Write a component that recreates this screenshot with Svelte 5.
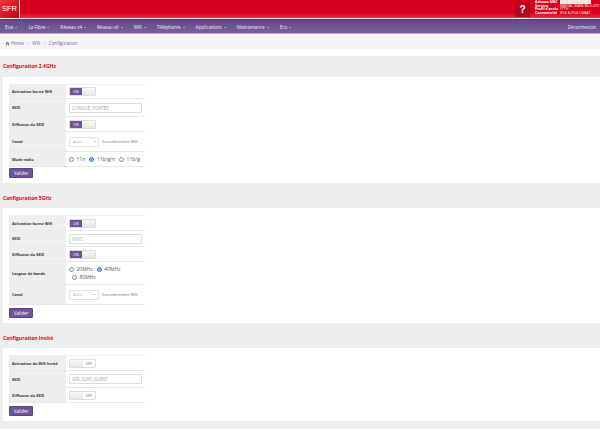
<script>
	const menu = ['Etat', 'La Fibre', 'Réseau v4', 'Réseau v6', 'Wifi', 'Téléphonie', 'Applications', 'Maintenance', 'Eco'];

	const sections = [
		{
			title: 'Configuration 2.4GHz',
			buttonGap: 1,
			rows: [
				{ label: 'Activation borne Wifi', type: 'toggle', on: true, h: 14 },
				{ label: 'SSID', type: 'input', value: 'LONGUE_PORTEE', h: 18 },
				{ label: 'Diffusion du SSID', type: 'toggle', on: true, h: 15 },
				{ label: 'Canal', type: 'select', h: 20 },
				{ label: 'Mode radio', type: 'radio', options: ['11n', '11b/g/n', '11b/g'], checked: '11b/g/n', h: 15 }
			]
		},
		{
			title: 'Configuration 5GHz',
			buttonGap: 3,
			rows: [
				{ label: 'Activation borne Wifi', type: 'toggle', on: true, h: 15 },
				{ label: 'SSID', type: 'input', value: 'VISIO', h: 16 },
				{ label: 'Diffusion du SSID', type: 'toggle', on: true, h: 15 },
				{ label: 'Largeur de bande', type: 'radio', options: ['20MHz', '40MHz', '80MHz'], checked: '40MHz', wrap: true, h: 23 },
				{ label: 'Canal', type: 'select', h: 20 }
			]
		},
		{
			title: 'Configuration Invité',
			buttonGap: 3,
			rows: [
				{ label: 'Activation du Wifi Invité', type: 'toggle', on: false, h: 15 },
				{ label: 'SSID', type: 'input', value: 'SFR_0280_GUEST', h: 17 },
				{ label: 'Diffusion du SSID', type: 'toggle', on: false, h: 15 }
			]
		}
	];
</script>

<header class="top">
	<div class="logo">SFR</div>
	<div class="status">
		<div class="help">?</div>
		<dl>
			<dt>Adresse MAC</dt><dd class="mac"></dd>
			<dt>Version</dt><dd>NB6VAC-MAIN-R4.0.47D</dd>
			<dt>Profil d'accès</dt><dd>FTTH</dd>
			<dt>Connectivité</dt><dd>IPv6 &amp; IPv4 CGNAT</dd>
		</dl>
	</div>
</header>

<nav class="menu">
	{#each menu as item}
		<span class="item">{item}<i class="caret"></i></span>
	{/each}
	<span class="logout">Déconnexion</span>
</nav>

<div class="crumbs">
	<svg class="home" viewBox="0 0 10 10" width="5" height="5">
		<path d="M5 1 0.5 5.2H2V9.500H4V6.500H6V9.500H8V5.200H9.500Z" fill="#8a8a8a" />
	</svg>
	<a href="#home">Home</a>
	<span class="sep">&gt;</span>
	<a href="#wifi">Wifi</a>
	<span class="sep">&gt;</span>
	<a href="#config">Configuration</a>
</div>

<main class="page">
	{#each sections as section}
		<h2>{section.title}</h2>
		<section class="panel">
			<table>
				<tbody>
					{#each section.rows as row}
						<tr style="height: {row.h}px">
							<th>{row.label}</th>
							<td>
								{#if row.type === 'toggle'}
									<span class="toggle">
										{#if row.on}
											<b class="on">ON</b><i class="knob"></i>
										{:else}
											<i class="knob"></i><b class="off">OFF</b>
										{/if}
									</span>
								{:else if row.type === 'input'}
									<input type="text" value={row.value} disabled />
								{:else if row.type === 'select'}
									<span class="select">Auto<i class="arrow"></i></span>
									<a class="link" href="#wifi">Encombrement Wifi</a>
								{:else}
									<span class="radios" class:wrap={row.wrap}>
										{#each row.options as opt}
											<label>
												<i class="radio" class:checked={opt === row.checked}></i>{opt}
											</label>
										{/each}
									</span>
								{/if}
							</td>
						</tr>
					{/each}
				</tbody>
			</table>
			<button type="button" style="margin-top: {section.buttonGap}px">Valider</button>
		</section>
	{/each}
</main>

<style>
	:global(body) {
		background: #fff;
		font-family: 'Open Sans', 'Liberation Sans', sans-serif;
		overflow: hidden;
	}
	.top {
		height: 18px;
		display: flex;
		justify-content: space-between;
		background: linear-gradient(#d6001c 0, #d9001b 70%, #e8304a 100%);
		border-bottom: 1px solid #f4e4e6;
	}
	.logo {
		width: 19px;
		border-right: 1px solid #f4d0d4;
		background: linear-gradient(135deg, #ee3a40, #c00012);
		color: #fff;
		font-family: 'Liberation Sans', sans-serif;
		font-size: 7.500px;
		line-height: 18px;
		text-align: center;
	}
	.status {
		display: flex;
		align-items: flex-start;
		margin-right: 3px;
	}
	.help {
		width: 15px;
		height: 14px;
		margin: 3px 5px 0 0;
		background: #b00a20;
		color: #fff;
		font: bold 10px/14px 'Liberation Sans', sans-serif;
		text-align: center;
	}
	dl {
		display: grid;
		grid-template-columns: 25px 37px;
		margin: 0;
		color: #fff;
		font-size: 3.500px;
		line-height: 3.700px;
	}
	dt {
		font-weight: 700;
		white-space: nowrap;
	}
	dd {
		margin: 0;
		white-space: nowrap;
	}
	.mac {
		height: 3.700px;
		background: #f6e4e0;
		width: 31px;
	}
	.menu {
		box-sizing: border-box;
		height: 15px;
		display: flex;
		align-items: center;
		padding-left: 5px;
		background: linear-gradient(#5a4d85, #7a5fa0);
		border-top: 1px solid #4c4474;
		border-bottom: 1px solid #b9a6d0;
		color: #eee;
		font-size: 4.600px;
	}
	.item {
		margin-right: 11px;
		white-space: nowrap;
	}
	.caret {
		display: inline-block;
		margin-left: 2px;
		vertical-align: middle;
		border: 1px solid transparent;
		border-top-color: #eee;
		border-bottom-width: 0;
	}
	.logout {
		margin-left: auto;
		margin-right: 4px;
	}
	.crumbs {
		height: 12px;
		margin-top: 3px;
		display: flex;
		align-items: center;
		gap: 3px;
		padding-left: 5px;
		background: #f5f5f5;
		font-size: 4.500px;
		color: #bbb;
	}
	.home {
		margin-right: -2px;
	}
	a {
		color: #7b5ea7;
		text-decoration: none;
	}
	.page {
		margin-top: 7px;
		padding-bottom: 8px;
		background: #eee;
	}
	h2 {
		margin: 0;
		padding-left: 3px;
		height: 21px;
		color: #e8000f;
		font-size: 5px;
		font-weight: 700;
		line-height: 21px;
	}
	.page h2:not(:first-child) {
		margin-top: 5px;
		height: 20px;
		line-height: 20px;
	}
	.panel {
		margin-left: 3px;
		padding: 7px 6px 5px;
		background: #fff;
	}
	table {
		width: 136px;
		border-collapse: collapse;
		border-top: 1px solid #eee;
	}
	tr {
		border-bottom: 1px solid #e8e8e8;
	}
	th {
		width: 54px;
		padding: 0 0 0 3px;
		background: #eee;
		color: #333;
		font-size: 3.800px;
		font-weight: 700;
		text-align: left;
	}
	td {
		padding: 0 0 0 3px;
		color: #555;
		font-size: 5px;
		line-height: 1;
	}
	.toggle {
		display: inline-flex;
		box-sizing: border-box;
		width: 27px;
		height: 9px;
		vertical-align: middle;
		border: 0.500px solid #ddd;
		border-radius: 1px;
		background: #fff;
		font-size: 3.500px;
		line-height: 8px;
		text-align: center;
	}
	.toggle b {
		flex: 1;
		font-weight: 400;
	}
	.on {
		background: #6f5499;
		color: #fff;
	}
	.off {
		color: #555;
	}
	.knob {
		width: 13px;
		background: linear-gradient(#f8f8f8, #e6e6e6);
	}
	input {
		box-sizing: border-box;
		display: block;
		width: 73px;
		height: 10px;
		padding: 0 2px;
		border: 1px solid #ddd;
		border-radius: 1px;
		background: #fff;
		color: #aaa;
		font: 4.500px 'Open Sans', 'Liberation Sans', sans-serif;
	}
	.select {
		box-sizing: border-box;
		display: inline-block;
		position: relative;
		width: 30px;
		height: 10px;
		margin-right: 2px;
		padding-left: 3px;
		vertical-align: middle;
		border: 1px solid #e2e2e2;
		border-radius: 1px;
		color: #aaa;
		font-size: 4px;
		line-height: 8px;
	}
	.arrow {
		position: absolute;
		right: 2px;
		top: 3px;
		border: 1.500px solid transparent;
		border-top-color: #999;
		border-bottom-width: 0;
	}
	.link {
		font-size: 3.800px;
		vertical-align: middle;
	}
	.radios {
		display: flex;
		gap: 4px;
	}
	.radios.wrap {
		flex-wrap: wrap;
		width: 70px;
		row-gap: 3px;
	}
	.radios.wrap label:last-child {
		margin-left: 3px;
	}
	label {
		display: inline-flex;
		align-items: center;
		gap: 2.500px;
		white-space: nowrap;
	}
	.radio {
		box-sizing: border-box;
		width: 5px;
		height: 5px;
		border: 0.500px solid #888;
		border-radius: 50%;
		background: #fff;
	}
	.radio.checked {
		border: 1px solid #2f7de8;
		background: #2f7de8;
		box-shadow: inset 0 0 0 0.500px #fff;
	}
	button {
		display: block;
		width: 24px;
		height: 10px;
		padding: 0;
		border: 1px solid #5b4385;
		border-radius: 1px;
		background: #6f5499;
		color: #fff;
		font: 4.500px 'Open Sans', 'Liberation Sans', sans-serif;
	}
</style>
